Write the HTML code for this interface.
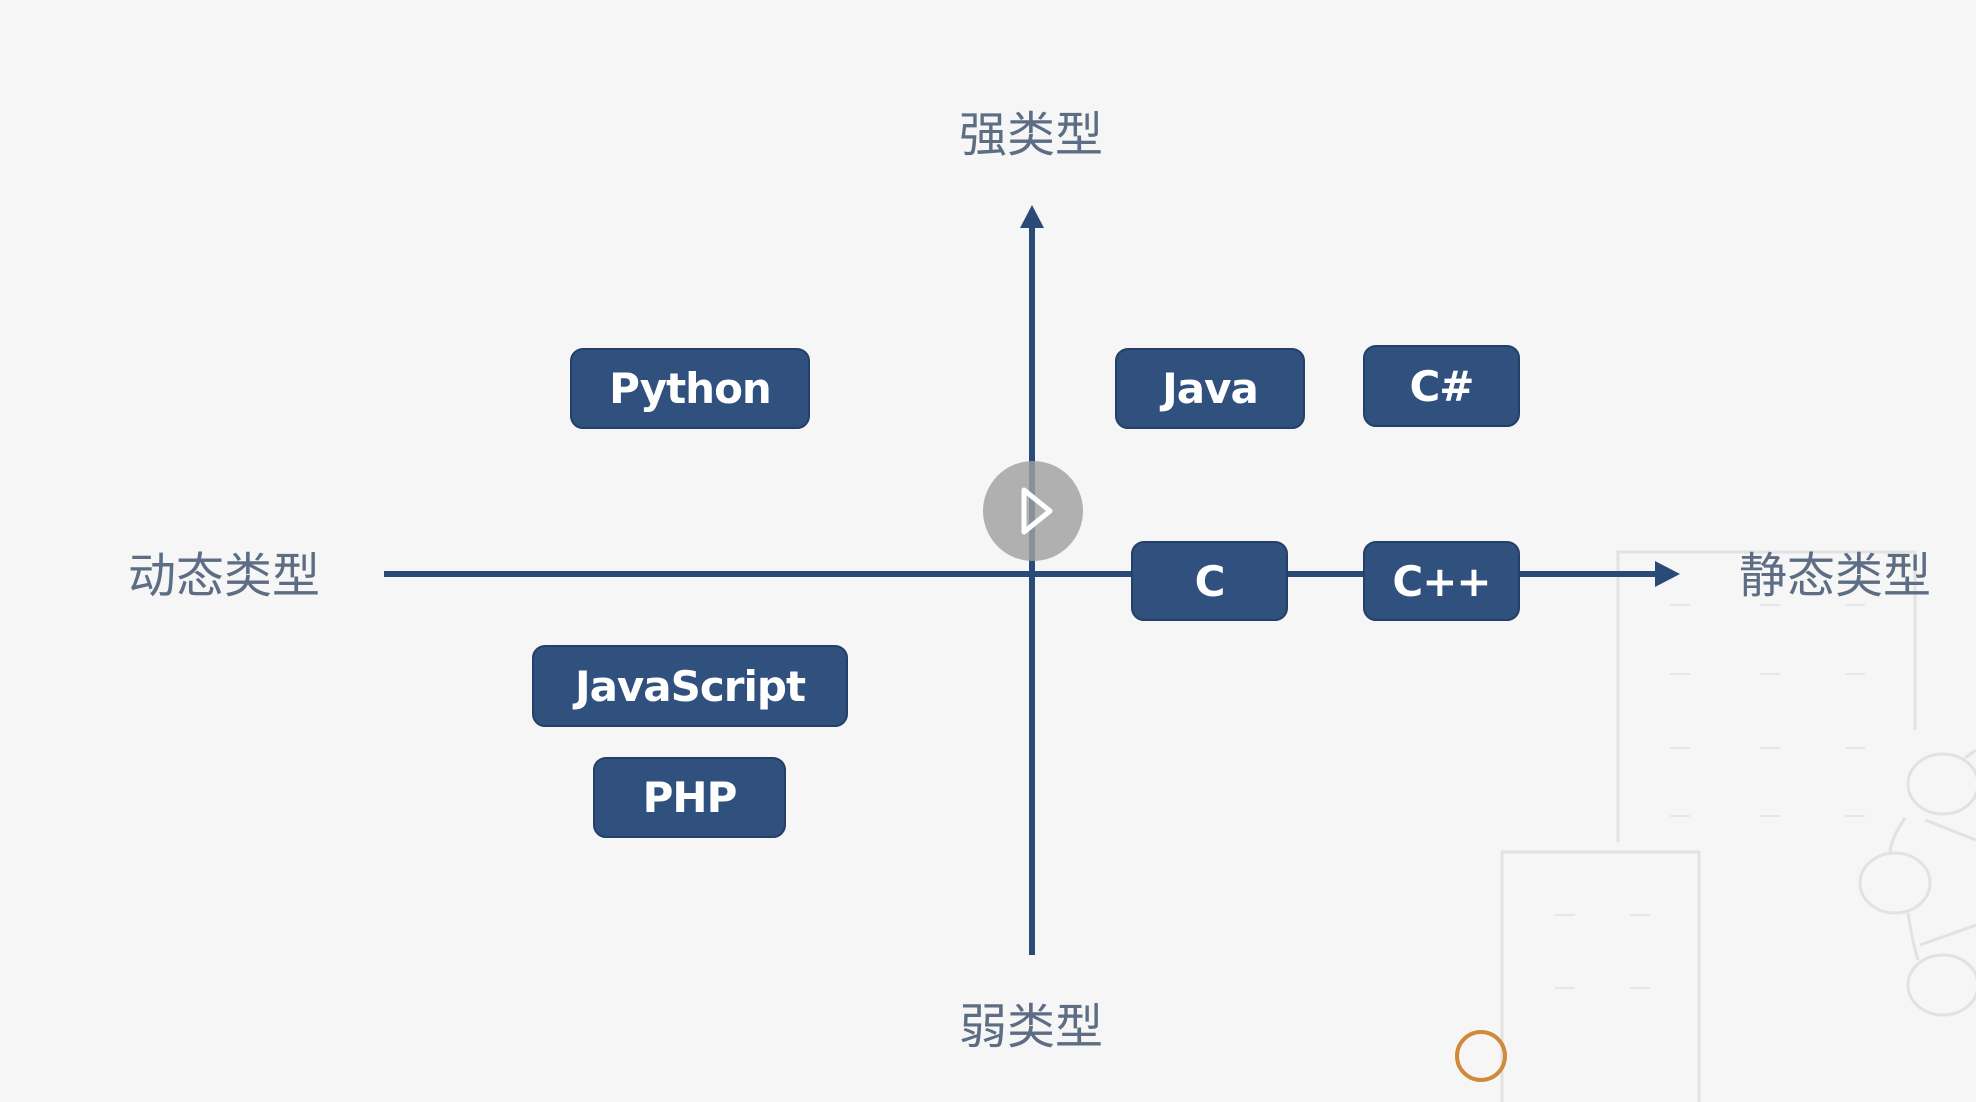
<!DOCTYPE html>
<html><head><meta charset="utf-8">
<style>
html,body{margin:0;padding:0}
body{width:1976px;height:1102px;background:#f6f6f6;position:relative;overflow:hidden;font-family:"Liberation Sans","Noto Sans CJK SC",sans-serif}
.box{position:absolute;background:#30507e;border:2px solid #243f68;border-radius:13px;color:#fff;font-weight:bold;font-size:42px;letter-spacing:-1px;display:flex;align-items:center;justify-content:center;box-sizing:border-box;font-family:"DejaVu Sans","Liberation Sans",sans-serif}
.lbl{position:absolute;color:#5d6d84;font-size:48px;font-family:"Noto Sans CJK SC",sans-serif;line-height:1;white-space:nowrap}
</style></head><body>
<svg width="1976" height="1102" style="position:absolute;left:0;top:0">
 <g fill="none" stroke="#e2e2e2" stroke-width="3">
  <path d="M1618 842 V552 H1915 V730"/>
  <path d="M1502 1102 V852 H1699 V1102"/>
  <ellipse cx="1943" cy="784" rx="35" ry="30"/>
  <ellipse cx="1895" cy="883" rx="35" ry="30"/>
  <ellipse cx="1943" cy="985" rx="35" ry="30"/>
  <path d="M1905 818 Q1890 840 1890 853 M1908 913 Q1912 940 1918 960 M1925 820 L1976 840 M1920 945 L1976 925 M1965 758 L1976 750"/>
 </g>
 <g stroke="#e6e6e6" stroke-width="2">
  <path d="M1670 605h20M1760 605h20M1845 605h20M1670 674h20M1760 674h20M1845 674h20M1670 748h20M1760 748h20M1845 748h20M1670 816h20M1760 816h20M1845 816h20M1555 915h20M1630 915h20M1555 988h20M1630 988h20"/>
 </g>
 <line x1="384" y1="574" x2="1665" y2="574" stroke="#2a4a78" stroke-width="6"/>
 <polygon points="1680,574 1655,561 1655,587" fill="#2a4a78"/>
 <line x1="1032" y1="225" x2="1032" y2="955" stroke="#2a4a78" stroke-width="6"/>
 <polygon points="1032,205 1020,228 1044,228" fill="#2a4a78"/>
 <circle cx="1481" cy="1056" r="24" fill="none" stroke="#d08a3a" stroke-width="4"/>
</svg>
<div class="lbl" style="left:959px;top:106px">强类型</div>
<div class="lbl" style="left:959px;top:998px">弱类型</div>
<div class="lbl" style="left:128px;top:547px">动态类型</div>
<div class="lbl" style="left:1739px;top:547px">静态类型</div>
<div class="box" style="left:570px;top:348px;width:240px;height:81px">Python</div>
<div class="box" style="left:1115px;top:348px;width:190px;height:81px">Java</div>
<div class="box" style="left:1363px;top:345px;width:157px;height:82px">C#</div>
<div class="box" style="left:1131px;top:541px;width:157px;height:80px">C</div>
<div class="box" style="left:1363px;top:541px;width:157px;height:80px">C++</div>
<div class="box" style="left:532px;top:645px;width:316px;height:82px">JavaScript</div>
<div class="box" style="left:593px;top:757px;width:193px;height:81px">PHP</div>
<svg width="1976" height="1102" style="position:absolute;left:0;top:0">
 <circle cx="1033" cy="511" r="50" fill="rgba(160,160,160,0.82)"/>
 <path d="M1024 490 L1050 511 L1024 532 Z" fill="none" stroke="#fff" stroke-width="5" stroke-linejoin="round"/>
</svg>
</body></html>
